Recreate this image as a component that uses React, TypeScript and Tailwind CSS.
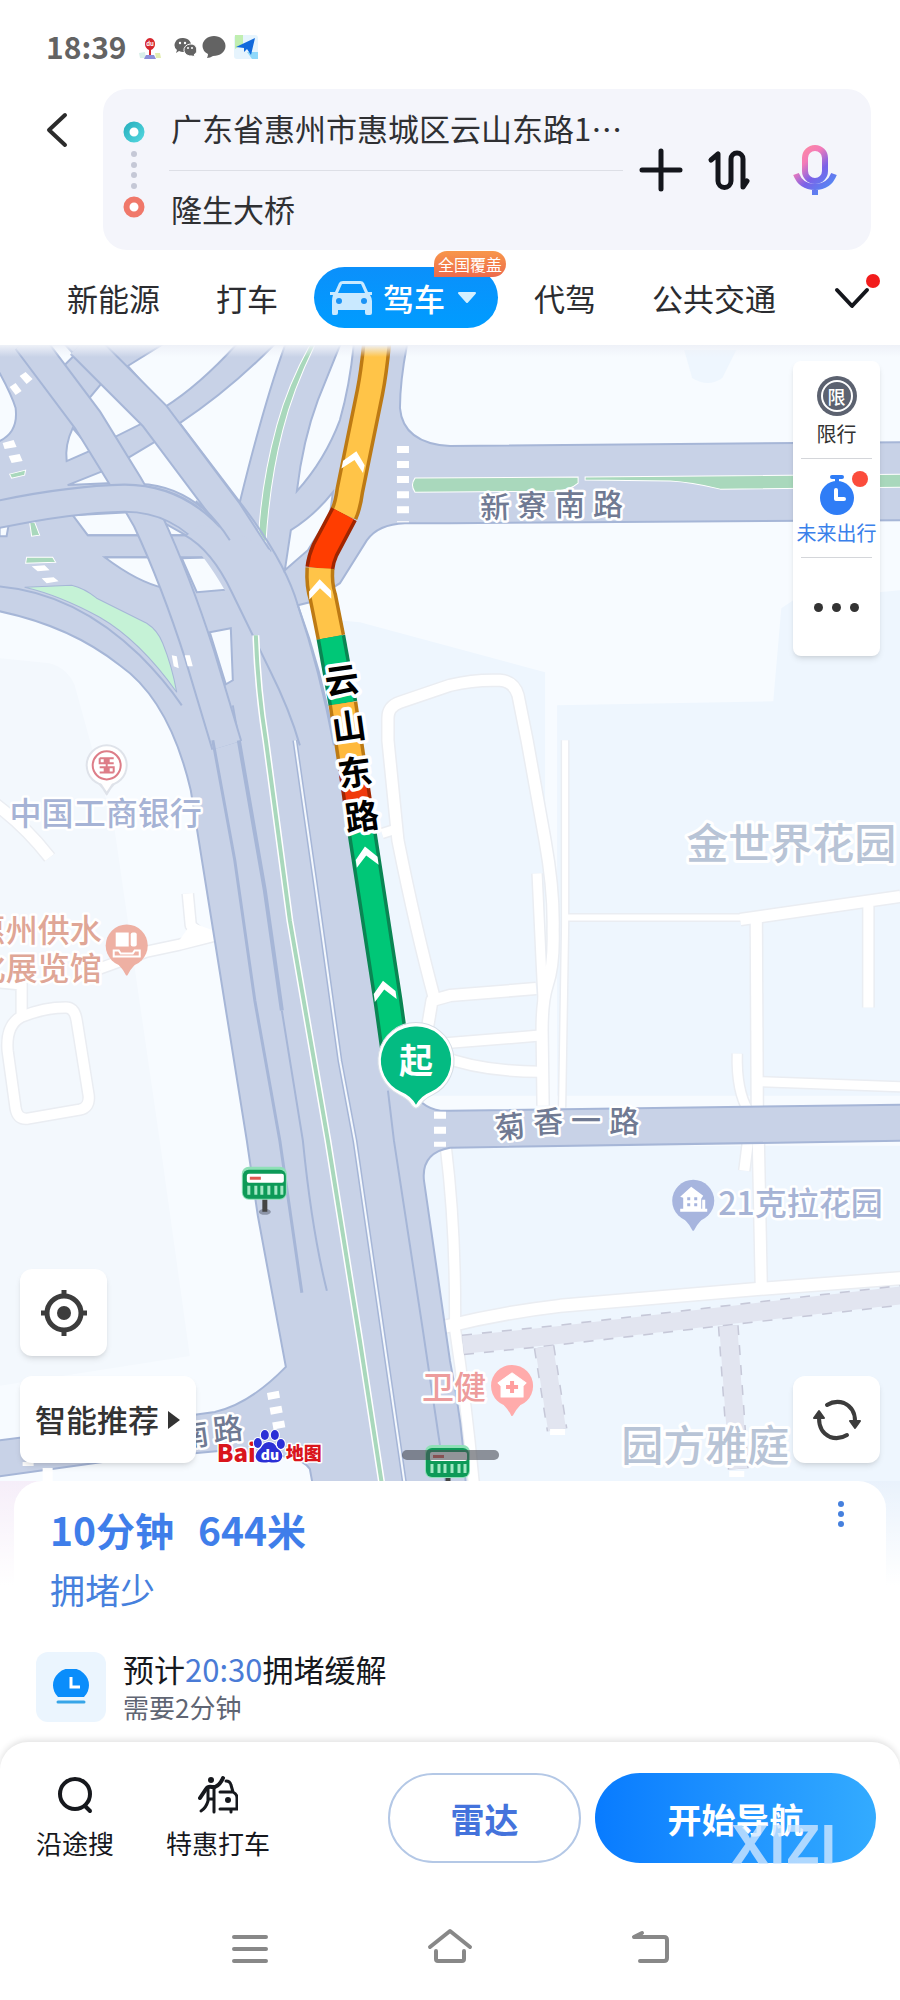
import React from 'react';

const ROAD = '#c8d2e7';
const EDGE = '#a6b6d7';
const LAND = '#f7fbff';

// [glyph, x, y, rotation]
type Glyph = [string, number, number, number];

const GREY_LABELS: Glyph[] = [
  ['新', 495, 507, -2], ['寮', 532, 505, -1], ['南', 570, 504, 0], ['路', 608, 504, 0],
  ['菊', 510, 1126, -8], ['香', 548, 1121, -3], ['一', 586, 1119, 0], ['路', 624, 1120, 0],
  ['南', 194, 1434, -8], ['路', 228, 1428, -6],
];

const ROUTE_LABELS: Glyph[] = [
  ['云', 342, 680, -8], ['山', 349, 726, -8], ['东', 355, 772, -8], ['路', 362, 816, -8],
];

const LAND_HOLES = [
  'M-5 370 L0 373 Q12 395 16 408 Q19 432 0 441 L-5 443Z',
  'M43 343 L62 368 L75 355 L64 343Z',
  'M88 400 L103 382 L143 423 L115 437Z',
  'M73 428 L92 450 L67 461 Q65 445 73 428Z',
  'M128 458 L158 440 L213 517 Q180 485 140 484Z',
  'M68 485 L103 471 L113 483Z',
  'M128 366 L165 343 L238 343 Q200 385 165 407Z',
  'M276 343 L286 343 Q265 400 240 502 L180 423 Q230 390 276 343Z',
  'M341 343 L354 343 Q350 385 340 420 Q325 460 297 491 Q303 440 318 400Z',
  'M291 530 Q315 515 333 492 L330 515 L308 550 L285 570Z',
  'M73 515 L130 512 L143 535 L88 535Z',
  'M161 521 L186 535 L168 535Z',
  'M105 557 L152 557 L165 588 Q138 582 105 557Z',
  'M182 558 L213 557 L232 589 L197 592Z',
  'M210 632 L231 628 L233 680 L226 684Z',
  'M0 527 L9 525 L7 536 L0 536Z',
];

const LOCAL_ROADS: { d: string; w: number }[] = [
  { d: 'M435 1000 Q416 930 398 840 L388 740 L388 718 Q388 706 400 702 L450 685 Q475 679 500 680 Q514 681 518 695 L527 740 L545 840 Q554 890 553 930 Q554 965 547 985 Q542 1000 542 1030 L543 1105', w: 11 },
  { d: 'M382 833 L398 828', w: 9 },
  { d: 'M427 1030 L432 1000 L450 995 L536 988', w: 11 },
  { d: 'M537 873 L541 960 L543 1000', w: 9 },
  { d: 'M440 1043 L540 1035', w: 10 },
  { d: 'M440 1055 Q480 1071 540 1071', w: 10 },
  { d: 'M565 740 L565 925 L562 1107', w: 6 },
  { d: 'M565 917 L745 917', w: 6 },
  { d: 'M740 919 L900 896', w: 11 },
  { d: 'M756 920 L757 1108', w: 11 },
  { d: 'M868 905 L868 1007', w: 10 },
  { d: 'M757 1081 L900 1086', w: 9 },
  { d: 'M737 1053 Q736 1090 748 1110', w: 9 },
  { d: 'M748 1138 L744 1170', w: 10 },
  { d: 'M758 1138 L761 1286', w: 11 },
  { d: 'M446 1148 Q456 1230 455 1328 Q466 1400 474 1485', w: 10 },
  { d: 'M444 1326 Q500 1312 560 1305 L760 1288 L905 1277', w: 12 },
  { d: 'M-4 804 Q25 825 50 857', w: 11 },
  { d: 'M100 968 L147 951 L180 944 L216 935', w: 10 },
  { d: 'M188 893 L191 925 L204 937', w: 10 },
  { d: 'M0 982 L22 984 L22 1015', w: 10 },
  { d: 'M22 1016 Q45 1007 66 1007 Q75 1007 77 1020 L89 1095 Q90 1107 80 1109 L28 1118 Q18 1119 16 1108 L8 1050 Q6 1024 22 1016Z', w: 10 },
];

const ROUTE: { d: string; fill: string; edge: string }[] = [
  { d: 'M377 340 Q374 372 370 392 L350 490 Q348 505 344 514', fill: '#ffc448', edge: '#bd7a14' },
  { d: 'M344 514 L325 550 Q321 559 320 568', fill: '#ff3d00', edge: '#a02600' },
  { d: 'M320 568 Q319 585 323 597 L331 637', fill: '#ffc448', edge: '#bd7a14' },
  { d: 'M331 637 L343 703', fill: '#00c777', edge: '#0a8553' },
  { d: 'M343 703 L353 770', fill: '#ffb93c', edge: '#bd7a14' },
  { d: 'M353 770 L361 825', fill: '#f0390c', edge: '#a02600' },
  { d: 'M361 825 L388 1000 L395 1050', fill: '#00c777', edge: '#0a8553' },
];

const ARROWS = [
  [355, 458, 12],
  [320, 586, -2],
  [366, 853, -8],
  [384, 987, -8],
];

const CROSSINGS = [
  'M403 446 V522',
  'M440 1111 V1146',
  'M273 1391 L280 1430',
];

function MapPin({ x, y, fill, children }: { x: number; y: number; fill: string; children: React.ReactNode }) {
  return (
    <g transform={`translate(${x} ${y})`}>
      <path d="M-7 19 Q-3 23 0 29 Q3 23 7 19Z" fill={fill} stroke={fill} strokeWidth="2" strokeLinejoin="round" />
      <circle r="21" fill={fill} />
      {children}
    </g>
  );
}

function BusStop({ x, y }: { x: number; y: number }) {
  return (
    <g transform={`translate(${x} ${y})`}>
      <ellipse cx="0" cy="28" rx="6" ry="3" fill="#8d95a8" />
      <path d="M0 14 V28" stroke="#444" strokeWidth="5" />
      <rect x="-23" y="-17" width="45" height="33" rx="7" fill="#8fe0b7" />
      <rect x="-22" y="-14" width="43" height="29" rx="6" fill="#0e9a58" />
      <rect x="-18" y="-10" width="37" height="9" rx="2" fill="#fff" />
      <rect x="-15" y="-7" width="11" height="3" fill="#e0564f" />
      <path d="M-16 2 V11 M-9 2 V11 M-3 2 V11 M4 2 V11 M11 2 V11 M17 2 V11" stroke="#a3e8c4" strokeWidth="3" />
    </g>
  );
}

function Glyphs({ items, size, fill, halo }: { items: Glyph[]; size: number; fill: string; halo: number }) {
  return (
    <g fontSize={size} fill={fill} stroke="#fff" strokeWidth={halo} paintOrder="stroke" strokeLinejoin="round" textAnchor="middle">
      {items.map(([ch, x, y, r]) => (
        <text key={`${x}-${y}`} transform={`translate(${x} ${y}) rotate(${r})`} dy="0.37em">
          {ch}
        </text>
      ))}
    </g>
  );
}

function MapCanvas() {
  return (
    <svg className="absolute inset-0 h-full w-full" viewBox="0 345 900 1135" preserveAspectRatio="xMidYMid slice" role="img" aria-label="路线地图">
      <defs>
        <linearGradient id="topShade" x1="0" y1="0" x2="0" y2="1">
          <stop offset="0" stopColor="#eef1f8" />
          <stop offset="1" stopColor="#eef1f8" stopOpacity="0" />
        </linearGradient>
      </defs>
      <rect x="0" y="345" width="900" height="1135" fill={LAND} />

      {/* land blocks */}
      <path d="M0 658 L50 663 Q68 668 75 685 L115 830 L160 1140 L190 1355 L0 1385Z" fill="#f3f8fd" />
      <path d="M338 620 L360 622 L545 672 L545 1095 L420 1095Z" fill="#eef6fe" />
      <path d="M557 705 L773 701 L781 608 L793 600 L900 590 L900 1095 L557 1095Z" fill="#eef6fe" />
      <path d="M420 1145 H900 V1480 H440Z" fill="#eef6fe" />
      <path d="M684 350 H736 L722 378 Q708 388 692 378Z" fill="#eef6fe" />

      <g fill="none" strokeLinejoin="round">
        {LOCAL_ROADS.map((r) => (
          <path key={r.d} d={r.d} stroke="#eaedf2" strokeWidth={r.w + 3} />
        ))}
        {LOCAL_ROADS.map((r) => (
          <path key={r.d} d={r.d} stroke="#fff" strokeWidth={r.w} />
        ))}
      </g>
      <path d="M192 922 L216 931 L216 938 L176 945Z" fill="#fff" />

      {/* pedestrian streets */}
      {['M463 1344 L560 1334 L740 1313 L905 1294', 'M544 1346 L557 1429', 'M728 1325 L738 1468'].map((d) => (
        <g key={d} fill="none">
          <path d={d} stroke="#c6c8d8" strokeWidth="21" strokeDasharray="10 10" />
          <path d={d} stroke="#e2e5f0" strokeWidth="18" />
        </g>
      ))}
      <path d="M550 1431 H565 M729 1473 H744" stroke="#fff" strokeWidth="6" />

      {/* main corridor with the side streets */}
      <g fill={ROAD} stroke={EDGE} strokeWidth="2">
        <path d="M-5 340 H408 Q400 380 400 408 Q403 443 450 446 L905 442 V520 L450 523 H405 Q378 524 367 540 L340 583 L310 602 L298 605 Q322 670 334 740 L352 740 L380 960 L412 1090 Q425 1112 450 1110 L905 1104 V1140 L450 1147 Q421 1152 424 1180 L450 1360 Q464 1430 466 1490 H314 L310 1468 Q306 1461 290 1456 L230 1449 L110 1460 L-5 1476 V1440 L120 1424 L215 1411 Q250 1403 286 1366 L258 1215 L247 1140 L215 940 L191 790 Q170 700 120 665 Q70 625 -5 610Z" />
      </g>
      <g fill={LAND} stroke={EDGE} strokeWidth="2">
        {LAND_HOLES.map((d) => (
          <path key={d} d={d} />
        ))}
      </g>

      {/* greenery */}
      <path d="M25 587 L72 585 Q85 588 97 598 L147 623 Q158 630 163 643 Q172 665 177 692 Q140 640 100 617 Q60 595 25 587Z" fill="#c5f2d6" stroke={EDGE} strokeWidth="1" />
      <g fill="#a9d8bc" stroke="#fff" strokeWidth="1">
        <path d="M415 478 L578 477 V483 Q570 490 555 491 L415 492 Q410 485 415 478Z" />
        <path d="M585 477 L905 474 V487 L720 489 Q690 482 670 481 L585 480Z" />
        <path d="M310 345 L315 345 Q293 390 283 430 Q270 480 266 543 L259 532 Q262 480 277 425 Q288 385 310 345Z" />
        <path d="M10 474 L26 470 L25 475 L12 478Z M30 522 L35 522 L40 535 L32 536Z M27 557 H53 L56 562 L26 563Z" />
      </g>

      {/* elevated roads */}
      <g fill="none" stroke={EDGE} strokeWidth="2">
        <path d="M-2 586 Q75 592 140 655 Q165 680 182 705" />
        <path d="M88 535 H190 M105 557 H215 M233 705 L240 745" />
      </g>
      <g fill="none">
        <path d="M28 340 L88 420 L128 485 L148 520 Q176 580 200 655 L227 745" stroke={EDGE} strokeWidth="32" />
        <path d="M28 340 L88 420 L128 485 L148 520 Q176 580 200 655 L227 745" stroke={ROAD} strokeWidth="28" />
        <path d="M-5 515 Q70 499 125 498 Q180 498 215 542" stroke={EDGE} strokeWidth="29" />
        <path d="M82 343 L155 416 L227 512 L258 560" stroke={EDGE} strokeWidth="33" />
        <path d="M82 343 L155 416 L227 512 L260 563" stroke={ROAD} strokeWidth="29" />
        <path d="M-5 515 Q70 499 125 498 Q180 498 218 545" stroke={ROAD} strokeWidth="25" />
      </g>
      <path d="M200 525 L232 530 L270 550 Q310 620 334 745 H300 Q285 690 225 590 Q205 555 185 537Z" fill={ROAD} />
      <path d="M185 535 Q212 550 232 592 L270 670 Q290 710 300 745 M240 502 Q285 560 298 605 Q320 670 334 745 M196 501 Q216 518 230 540" fill="none" stroke={EDGE} strokeWidth="2" />

      {/* lane dividers */}
      <g fill="none" stroke={EDGE} strokeWidth="3">
        <path d="M213 740 L235 860 L255 1000 L280 1140 L302 1292" />
        <path d="M239 740 L265 890 L282 1010" strokeWidth="4" />
        <path d="M282 1010 L303 1140 Q312 1230 327 1290" strokeWidth="2" />
        <path d="M295 740 L315 880 L340 1060 L355 1140 L405 1485" strokeWidth="5" />
        <path d="M295 740 L315 880 L340 1060 L355 1140 L405 1485" stroke="#f4f8fd" strokeWidth="2" />
        <path d="M388 1090 L394 1140 L423 1330 L446 1485" strokeWidth="2" />
      </g>
      <path d="M256 635 Q258 690 266 740 L290 920 L328 1140 L360 1340 L383 1490" fill="none" stroke="#fff" strokeWidth="7" />
      <path d="M256 635 Q258 690 266 740 L290 920 L328 1140 L360 1340 L383 1490" fill="none" stroke="#a9d8bc" strokeWidth="4" />

      <g fill="none" stroke="#fff" strokeWidth="12" strokeDasharray="7 8">
        {CROSSINGS.map((d) => (
          <path key={d} d={d} />
        ))}
      </g>
      <g fill="#fff">
        <path d="M10 387 L16 383 L22 391 L16 395Z M20 376 L26 372 L33 379 L27 384Z M3 443 L14 440 L17 447 L5 449Z M9 456 L20 454 L23 461 L12 463Z" />
        <path d="M32 566 L45 565 L50 570 L38 571Z M42 578 L54 577 L59 581 L47 583Z M172 655 L177 656 L179 668 L174 666Z M185 655 L190 655 L193 666 L188 666Z" />
        <path d="M43 1467 H53 V1482 H43Z M23 1461 H34 V1465 H23Z" />
      </g>

      {/* route */}
      <g fill="none">
        {ROUTE.map((s) => (
          <g key={s.d}>
            <path d={s.d} stroke={s.edge} strokeWidth="29" />
            <path d={s.d} stroke={s.fill} strokeWidth="22" />
          </g>
        ))}
      </g>
      {ARROWS.map(([x, y, r]) => (
        <path key={y} d="M-11 5 L0 -7 L11 5 V13 L0 2 L-11 13Z" fill="#fff" transform={`translate(${x} ${y}) rotate(${r})`} />
      ))}

      {/* place names */}
      <g className="font-medium" fontSize="32" stroke="#fff" strokeWidth="5" paintOrder="stroke" strokeLinejoin="round">
        <text x="10" y="825" fill="#a6b3d5">中国工商银行</text>
        <text x="102" y="941" fill="#dfa696" textAnchor="end">惠州供水</text>
        <text x="102" y="979" fill="#dfa696" textAnchor="end">化展览馆</text>
        <text x="718" y="1214" fill="#a6b3d5">21克拉花园</text>
        <text x="422" y="1398" fill="#ed9c9c">卫健</text>
        <g fontSize="42" fill="#b8c4d6" strokeWidth="6">
          <text x="686" y="859">金世界花园</text>
          <text x="621" y="1460">园方雅庭</text>
        </g>
      </g>
      <g className="font-medium">
        <Glyphs items={GREY_LABELS} size={30} fill="#707a93" halo={5} />
      </g>
      <g className="font-bold">
        <Glyphs items={ROUTE_LABELS} size={34} fill="#000" halo={7} />
      </g>

      {/* points of interest */}
      <MapPin x={107} y={765} fill="#dfe3ea">
        <circle r="19" fill="#fff" />
        <path d="M-6 17 L0 26 L6 17Z" fill="#fff" />
        <circle r="14" fill="none" stroke="#dd7d88" strokeWidth="2" />
        <path d="M-7 -7 H-2 V-2 H-7 V-7 M7 -7 H2 V-2 H7 M-7 2 H-2 V7 H-7 M7 7 H2 V2 H7 V7 M0 -8 V8" fill="none" stroke="#dd7d88" strokeWidth="2" />
      </MapPin>
      <MapPin x={127} y={945} fill="#eeb0a3">
        <rect x="-11" y="-13" width="13" height="14" fill="#fff" />
        <rect x="4" y="-13" width="6" height="14" rx="2" fill="#fff" />
        <path d="M-13 4 V11 H13 V4 M-13 5 H-8 L-6 8 H6 L8 5 H13" fill="none" stroke="#fff" strokeWidth="2" />
      </MapPin>
      <MapPin x={693} y={1200} fill="#a7b5de">
        <path d="M-13 -4 L-2 -14 L10 -5 L8 -2 V8 H9 V-1 H12 V8 H14 V11 H-13 V8 H-10 V-3Z" fill="#fff" />
        <path d="M-6 -2 H-3 M1 -2 H4 M-6 4 H-3 M1 4 H4" stroke="#a7b5de" strokeWidth="3" />
      </MapPin>
      <MapPin x={512} y={1385} fill="#ffabab">
        <path d="M-14 -3 L0 -13 L14 -3 L11 0 V11 H-11 V0Z" fill="#fff" stroke="#fff" strokeLinejoin="round" />
        <path d="M-6 1 H6 M0 -5 V7" stroke="#ff9f9f" strokeWidth="4" />
      </MapPin>
      <BusStop x={265} y={1183} />
      <BusStop x={448} y={1461} />
      <rect x="402" y="1449" width="97" height="10" rx="5" fill="#4a4d55" fillOpacity="0.6" />

      <g transform="translate(416 1060)">
        <path d="M0 -38 A38 38 0 0 1 17 34 Q7 39 4 45 Q0 50 -4 45 Q-7 39 -17 34 A38 38 0 0 1 0 -38Z" fill="#fff" stroke="#d5dde6" strokeWidth="1" />
        <path d="M0 -34 A34 34 0 0 1 15 31 Q5 35 0 44 Q-5 35 -15 31 A34 34 0 0 1 0 -34Z" fill="#04bb82" />
        <text className="font-bold" fontSize="34" fill="#fff" textAnchor="middle" dy="0.36em">起</text>
      </g>

      {/* Baidu logo */}
      <g className="font-black" stroke="#fff" strokeWidth="3" paintOrder="stroke" strokeLinejoin="round" fill="#d9151c">
        <text x="217" y="1461" fontSize="24">Bai</text>
        <text x="286" y="1459" fontSize="18">地图</text>
        <g fill="#2b2fd6" strokeWidth="2">
          <ellipse cx="258" cy="1442" rx="4" ry="5" />
          <ellipse cx="265" cy="1434" rx="4" ry="5" />
          <ellipse cx="275" cy="1434" rx="4" ry="5" />
          <ellipse cx="281" cy="1443" rx="4" ry="5" />
          <path d="M269 1441 Q275 1441 277 1447 Q284 1452 282 1457 Q280 1463 269 1461 Q258 1463 256 1457 Q255 1452 261 1447 Q264 1441 269 1441Z" />
        </g>
        <text x="261" y="1459" fontSize="14" fill="#fff" stroke="none">du</text>
      </g>
      <rect x="0" y="345" width="900" height="12" fill="url(#topShade)" />
    </svg>
  );
}

function StatusBar() {
  return (
    <div className="flex items-center px-11 pt-6 pb-5 text-[#636363]">
      <span className="ml-0.5 w-20 text-[30px] leading-[45px] font-bold">18:39</span>
      <svg className="ml-3 h-6 w-6" viewBox="0 0 24 24" aria-hidden="true">
        <path d="M1 18 L7 17 L8 23 H2Z" fill="#d9efe9" />
        <path d="M17 18 L22 18 L23 23 H18Z" fill="#e3edb0" />
        <path d="M8 20 H16 L18 24 H6Z" fill="#8b8fd8" />
        <path d="M12 3 A5.500 5.500 0 0 1 17 9 Q17 13 13 15 V20 H11 V15 Q7 13 7 9 A5.500 5.500 0 0 1 12 3Z" fill="#d6262e" />
        <text x="12" y="11" fontSize="6" fill="#fff" textAnchor="middle" className="font-bold">du</text>
      </svg>
      <svg className="ml-3 h-6 w-6" viewBox="0 0 24 24" aria-hidden="true" fill="#636363">
        <path d="M9 3 A8 7 0 1 1 5 16 L2 18 L3 15 A8 7 0 0 1 9 3Z" />
        <circle cx="6" cy="8" r="1.200" fill="#fff" />
        <circle cx="11" cy="8" r="1.200" fill="#fff" />
        <path d="M16 9 A6.500 6 0 0 1 20 20 L21 22 L18 21 A7 6 0 1 1 16 9Z" stroke="#fff" strokeWidth="1" />
        <circle cx="14" cy="13" r="1" fill="#fff" />
        <circle cx="18" cy="13" r="1" fill="#fff" />
      </svg>
      <svg className="ml-1 h-6 w-6" viewBox="0 0 24 24" aria-hidden="true">
        <path d="M12 1 C18 1 23.500 5 23.500 11 C23.500 17 18 21 11 21 Q8 23 5 23 Q6 21 6 19 Q0.500 16 0.500 11 C0.500 5 6 1 12 1Z" fill="#636363" />
      </svg>
      <svg className="ml-2 h-6 w-6" viewBox="0 0 24 24" aria-hidden="true">
        <rect width="24" height="24" rx="3" fill="#e6f4fd" />
        <path d="M1 0 H9 V9 L1 14Z" fill="#c0eeb0" />
        <path d="M13 17 H24 V24 H18Z" fill="#8fd8fa" />
        <path d="M21 3 L17 20 L13 14 L10 17 L10 13 L2 12Z" fill="#1069dc" />
      </svg>
    </div>
  );
}

function RouteSearch() {
  return (
    <div className="flex pr-[29px]">
      <button type="button" aria-label="返回" className="flex h-[82px] w-[103px] shrink-0 items-center justify-center pl-2.5 text-[#2b2b2b]">
        <svg className="h-9 w-6" viewBox="0 0 24 36" fill="none" stroke="currentColor" strokeWidth="4" strokeLinecap="round" strokeLinejoin="round">
          <path d="M20 3 L4 18 L20 33" />
        </svg>
      </button>
      <div className="flex min-w-0 flex-1 items-center rounded-3xl bg-[#f4f5fb] pr-8 pl-5">
        <svg className="h-[98px] w-[22px] shrink-0" viewBox="0 0 22 98" aria-hidden="true">
          <defs>
            <linearGradient id="from" x1="0" y1="0" x2="1" y2="1">
              <stop offset="0" stopColor="#2bb3c0" />
              <stop offset="1" stopColor="#4fd3dc" />
            </linearGradient>
          </defs>
          <circle cx="11" cy="11" r="7.500" fill="#fff" stroke="url(#from)" strokeWidth="6" />
          <circle cx="11" cy="86" r="7.500" fill="#fff" stroke="#f0786a" strokeWidth="6" />
          <g fill="#c5c8d6">
            <circle cx="11" cy="33" r="3" />
            <circle cx="11" cy="44" r="3" />
            <circle cx="11" cy="54" r="3" />
            <circle cx="11" cy="65" r="3" />
          </g>
        </svg>
        <div className="ml-6 min-w-0 flex-1 text-[31px] text-[#2f3033]">
          <input aria-label="起点" defaultValue="广东省惠州市惠城区云山东路1…" className="block h-[82px] w-full border-b border-[#dddfe6] bg-transparent pb-1 pl-0.5 outline-none" />
          <input aria-label="终点" defaultValue="隆生大桥" className="block h-[79px] w-full bg-transparent pb-1 pl-0.5 outline-none" />
        </div>
        <div className="ml-4 flex shrink-0 items-center text-[#14161c]">
          <button type="button" aria-label="添加途经点">
            <svg className="h-11 w-11" viewBox="0 0 44 44" stroke="currentColor" strokeWidth="5" strokeLinecap="round">
              <path d="M3 22 H41 M22 3 V41" />
            </svg>
          </button>
          <button type="button" aria-label="交换起终点" className="ml-6">
            <svg className="h-11 w-11" viewBox="0 0 44 44" fill="none" stroke="currentColor" strokeWidth="5" strokeLinecap="round" strokeLinejoin="round">
              <path d="M4 12 L11 6 V33 A6 6 0 0 0 24 33 V11 A6 6 0 0 1 36 11 V39 L40 33" />
            </svg>
          </button>
          <button type="button" aria-label="语音输入" className="ml-10">
            <svg className="h-[52px] w-12" viewBox="0 0 48 52" fill="none">
              <defs>
                <linearGradient id="mic" x1="6" y1="4" x2="42" y2="44" gradientUnits="userSpaceOnUse">
                  <stop offset="0" stopColor="#ff8d9c" />
                  <stop offset="0.300" stopColor="#f47bb8" />
                  <stop offset="0.600" stopColor="#7a62e8" />
                  <stop offset="1" stopColor="#4f8df5" />
                </linearGradient>
              </defs>
              <rect x="14" y="4" width="20" height="33" rx="10" stroke="url(#mic)" strokeWidth="6" />
              <path d="M5 30 Q10 43 24 43 Q38 43 43 30 M24 43 V51" stroke="url(#mic)" strokeWidth="6" />
            </svg>
          </button>
        </div>
      </div>
    </div>
  );
}

function ModeTabs() {
  return (
    <nav className="flex items-center justify-between pt-[17px] pr-7 pb-[17px] pl-[67px] text-[31px] leading-[46px] whitespace-nowrap text-[#2b2c30]">
      <button type="button">新能源</button>
      <button type="button">打车</button>
      <button type="button" className="relative -mx-5 flex h-[61px] w-[184px] items-center rounded-full bg-gradient-to-b from-[#0b90fb] to-[#009cff] pl-4 font-medium text-white">
        <svg className="h-[34px] w-[43px]" viewBox="0 0 43 34" aria-hidden="true">
          <path d="M9 2 Q10 0 13 0 H30 Q33 0 34 2 L38 11 H42 V14 H40 Q42 17 42 20 V32 Q42 34 40 34 H37 Q35 34 35 32 V29 H8 V32 Q8 34 6 34 H3 Q2 34 2 32 V20 Q2 17 3 14 H0 V11 H5Z M12 3 L8 12 H35 L31 3Z" fill="#c9e9ff" fillRule="evenodd" />
          <circle cx="9" cy="20" r="3" fill="#1b93f5" />
          <circle cx="34" cy="20" r="3" fill="#1b93f5" />
        </svg>
        <span className="ml-2.5">驾车</span>
        <svg className="ml-3 h-3 w-5" viewBox="0 0 20 12" aria-hidden="true">
          <path d="M2 1 H18 L10 10Z" fill="#d4f0ff" stroke="#d4f0ff" strokeWidth="2" strokeLinejoin="round" />
        </svg>
        <span className="absolute -top-4 -right-2 h-[26px] rounded-full rounded-bl-none bg-gradient-to-b from-[#f8974a] to-[#ec6a4c] px-1 text-base leading-[26px] font-normal">全国覆盖</span>
      </button>
      <button type="button">代驾</button>
      <button type="button">公共交通</button>
      <button type="button" aria-label="更多出行方式" className="relative text-[#14161c]">
        <svg className="h-6 w-10" viewBox="0 0 40 24" fill="none" stroke="currentColor" strokeWidth="4" strokeLinecap="round" strokeLinejoin="round">
          <path d="M5 4 L20 20 L35 4" />
        </svg>
        <span className="absolute -top-3 -right-2 size-3.5 rounded-full bg-[#f21c1c]" />
      </button>
    </nav>
  );
}

function MapTools() {
  return (
    <div className="w-[87px] self-end rounded-lg bg-white px-2 text-[20px] leading-7 whitespace-nowrap text-[#333] shadow-md">
      <button type="button" className="flex h-[98px] w-full flex-col items-center justify-end border-b border-[#d4d6da] pb-2.5">
        <span className="grid size-10 place-items-center rounded-full bg-[#5c6270]">
          <span className="grid size-8 place-items-center rounded-full border-2 border-white text-lg leading-none font-medium text-white">限</span>
        </span>
        <span className="mt-1">限行</span>
      </button>
      <button type="button" className="relative flex h-[99px] w-full flex-col items-center justify-end border-b border-[#d4d6da] pb-2.5 text-[#3a80ea]">
        <svg className="h-10 w-9" viewBox="0 0 36 40" aria-hidden="true">
          <path d="M13 2 H23 M18 2 V8" stroke="#2f7df6" strokeWidth="4" strokeLinecap="round" />
          <circle cx="18" cy="23" r="17" fill="#2f7df6" />
          <path d="M17 15 V24 H25" fill="none" stroke="#fff" strokeWidth="4" strokeLinecap="round" strokeLinejoin="round" />
        </svg>
        <span className="mt-1">未来出行</span>
        <span className="absolute top-3 right-1 size-4 rounded-full bg-[#fb4c3c]" />
      </button>
      <button type="button" aria-label="更多" className="flex h-[98px] w-full items-center justify-center gap-[9px]">
        <span className="size-[9px] rounded-full bg-[#333]" />
        <span className="size-[9px] rounded-full bg-[#333]" />
        <span className="size-[9px] rounded-full bg-[#333]" />
      </button>
    </div>
  );
}

function MapSection() {
  return (
    <section className="relative flex min-h-[900px] flex-1 flex-col justify-between overflow-hidden px-5 pt-4 pb-[18px]">
      <MapCanvas />
      <div className="relative flex flex-col">
        <MapTools />
      </div>
      <div className="relative flex items-end justify-between">
        <div className="flex flex-col items-start gap-5">
          <button type="button" aria-label="定位" className="grid size-[87px] place-items-center rounded-xl bg-white shadow-md">
            <svg className="size-12" viewBox="0 0 48 48" fill="none" stroke="#3c3c3c" strokeWidth="5">
              <circle cx="24" cy="24" r="17" />
              <circle cx="24" cy="24" r="7" fill="#3c3c3c" stroke="none" />
              <path d="M24 1 V8 M24 40 V47 M1 24 H8 M40 24 H47" />
            </svg>
          </button>
          <button type="button" className="flex h-[87px] w-44 items-center justify-center gap-2 rounded-xl bg-white text-[31px] font-medium whitespace-nowrap text-[#333] shadow-md">
            智能推荐
            <svg className="h-5 w-3.5" viewBox="0 0 14 20" aria-hidden="true">
              <path d="M1 1 V19 L13 10Z" fill="#333" />
            </svg>
          </button>
        </div>
        <button type="button" aria-label="刷新" className="grid size-[87px] place-items-center rounded-xl bg-white shadow-md">
          <svg className="size-12" viewBox="0 0 48 48" fill="none" stroke="#3c3c3c" strokeWidth="4" strokeLinecap="round">
            <path d="M14 9 Q22 4 31 7 Q42 12 42 25" />
            <path d="M34 39 Q26 44 17 41 Q6 36 6 22" />
            <path d="M37 25 H47 L42 32Z M1 22 H11 L6 15Z" fill="#3c3c3c" strokeWidth="2" strokeLinejoin="round" />
          </svg>
        </button>
      </div>
    </section>
  );
}

function RouteSummary() {
  return (
    <section className="bg-[linear-gradient(to_bottom,transparent,white_40%),linear-gradient(to_right,#f6eef9,#e9f2fc)] px-3.5">
      <div className="rounded-t-[28px] bg-white pb-[17px]">
        <div className="flex items-start justify-between pt-5 pr-[42px] pl-9">
          <div className="text-[#3f7eea]">
            <h1 className="flex gap-6 text-[39px] leading-[56px] font-bold">
              <span>10分钟</span>
              <span>644米</span>
            </h1>
            <p className="mt-1.5 text-[35px] leading-[52px] text-[#4680dd]">拥堵少</p>
          </div>
          <button type="button" aria-label="更多选项" className="flex flex-col gap-1">
            <span className="size-1.5 rounded-full bg-[#4680dd]" />
            <span className="size-1.5 rounded-full bg-[#4680dd]" />
            <span className="size-1.5 rounded-full bg-[#4680dd]" />
          </button>
        </div>
        <div className="mt-[34px] flex items-center pl-[22px]">
          <div className="grid size-[70px] place-items-center rounded-xl bg-[#ebf5fe]">
            <svg className="size-9" viewBox="0 0 36 36" aria-hidden="true">
              <path d="M5 28 A18 17 0 1 1 31 28Z" fill="#0a8dfb" />
              <path d="M18 8 V18 L27 18" fill="none" stroke="#fff" strokeWidth="3" />
              <path d="M5 33 H31" stroke="#37a5e8" strokeWidth="3" strokeLinecap="round" />
            </svg>
          </div>
          <div className="ml-[17px]">
            <p className="text-[31px] leading-10 text-[#16181d]">
              预计<span className="text-[#4a7bd6]">20:30</span>拥堵缓解
            </p>
            <p className="text-[26px] leading-9 text-[#5f6573]">需要2分钟</p>
          </div>
        </div>
      </div>
    </section>
  );
}

function ActionBar() {
  return (
    <footer className="rounded-t-[28px] bg-white pt-[31px] shadow-[0_-2px_6px_rgba(0,0,0,0.12)]">
      <div className="relative flex items-center pr-6 pl-9 whitespace-nowrap text-[#16181d]">
        <button type="button" className="flex flex-col items-center text-[26px] leading-9">
          <svg className="h-10 w-10" viewBox="0 0 40 40" fill="none" stroke="currentColor" strokeWidth="4" strokeLinecap="round">
            <circle cx="20" cy="19" r="15" />
            <path d="M30 31 L35 36" />
          </svg>
          <span className="mt-2.5">沿途搜</span>
        </button>
        <button type="button" className="ml-[52px] flex flex-col items-center text-[26px] leading-9">
          <svg className="h-10 w-10" viewBox="0 0 40 40" fill="none" stroke="currentColor" strokeWidth="4" strokeLinecap="round">
            <circle cx="13" cy="5" r="3" fill="currentColor" stroke="none" />
            <path d="M2 23 L8 14 Q10 11 14 12 L17 12 Q22 10 25 3" />
            <path d="M10 13 V26 Q8 33 3 36 M16 14 V37 M10 24 H16" strokeWidth="3" />
            <path d="M28 6 Q32 6 33 10 L35 17 M22 17 H35 Q39 19 39 23 V34 H22 M33 34 V37" strokeWidth="3" />
            <circle cx="30" cy="25" r="3" fill="currentColor" stroke="none" />
          </svg>
          <span className="mt-2.5">特惠打车</span>
        </button>
        <div className="ml-auto flex items-center gap-3.5 text-[34px] font-bold">
          <button type="button" className="h-[90px] w-[193px] rounded-full border-2 border-[#b4c8e6] text-[#4473dc]">雷达</button>
          <button type="button" className="h-[90px] w-[281px] rounded-full bg-gradient-to-r from-[#087bff] via-[#1f93ff] to-[#33abff] text-white">开始导航</button>
        </div>
        <span className="pointer-events-none absolute right-16 -bottom-3 font-['Inter',sans-serif] text-[54px] leading-[60px] font-bold text-[#cfe6ff]/80">XIZI</span>
      </div>
      <div className="grid grid-cols-3 px-[150px] pt-[63px] pb-[30px] text-[#888]">
        <button type="button" aria-label="最近任务" className="flex justify-center">
          <svg className="h-11 w-12" viewBox="0 0 48 44" stroke="currentColor" strokeWidth="4" strokeLinecap="round">
            <path d="M8 11 H40 M8 23 H40 M8 35 H40" />
          </svg>
        </button>
        <button type="button" aria-label="主屏幕" className="flex justify-center">
          <svg className="h-11 w-12" viewBox="0 0 48 44" fill="none" stroke="currentColor" strokeWidth="4" strokeLinecap="round" strokeLinejoin="round">
            <path d="M4 21 L24 5 L44 21 M10 25 V33 Q10 35 12 35 H36 Q38 35 38 33 V25" />
          </svg>
        </button>
        <button type="button" aria-label="返回上一级" className="flex justify-center">
          <svg className="h-11 w-12" viewBox="0 0 48 44" fill="none" stroke="currentColor" strokeWidth="4" strokeLinecap="round" strokeLinejoin="round">
            <path d="M16 7 L8 11 H38 Q41 11 41 14 V32 Q41 35 38 35 H14" />
          </svg>
        </button>
      </div>
    </footer>
  );
}

export default function App() {
  return (
    <main className="flex min-h-screen flex-col bg-white font-['Noto_Sans_CJK_SC',sans-serif]">
      <header>
        <StatusBar />
        <RouteSearch />
        <ModeTabs />
      </header>
      <MapSection />
      <RouteSummary />
      <ActionBar />
    </main>
  );
}
